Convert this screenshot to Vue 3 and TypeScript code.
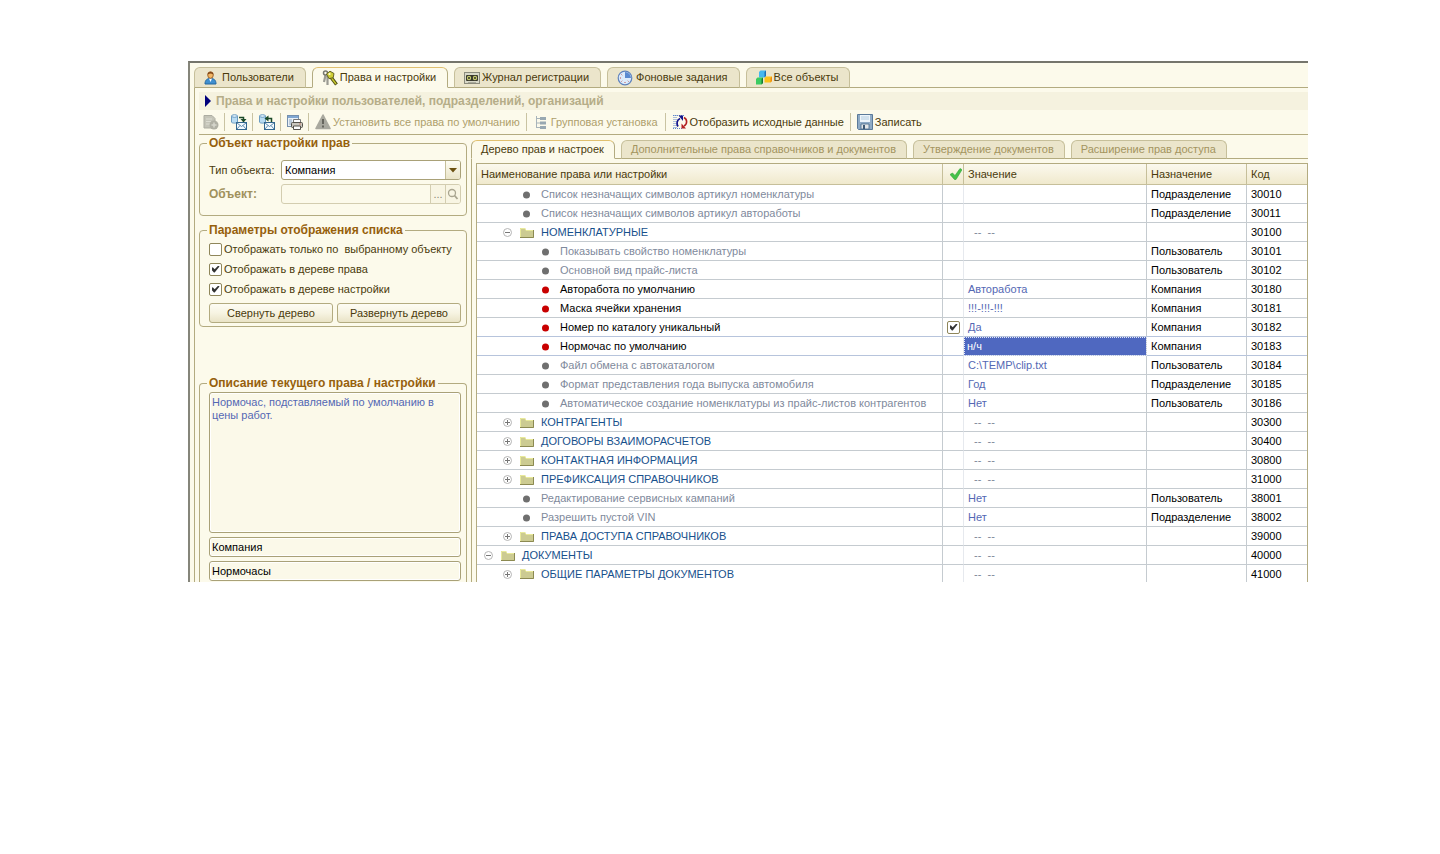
<script setup lang="ts">
import { ref } from 'vue'

type Kind = 'folder' | 'open' | 'gray' | 'red'
interface Row {
  level: 1 | 2 | 3
  kind: Kind
  name: string
  value: string
  target: string
  code: string
  checked?: boolean
  selected?: boolean
}

const P = 'Подразделение'
const U = 'Пользователь'
const K = 'Компания'
const DASH = '\u00a0\u00a0--\u00a0\u00a0--'

const row = (level: 1 | 2 | 3, kind: Kind, name: string, value: string, target: string, code: string): Row => ({
  level, kind, name, value, target, code,
})

const rows: Row[] = [
  row(2, 'gray', 'Список незначащих символов артикул номенклатуры', '', P, '30010'),
  row(2, 'gray', 'Список незначащих символов артикул автоработы', '', P, '30011'),
  row(2, 'open', 'НОМЕНКЛАТУРНЫЕ', DASH, '', '30100'),
  row(3, 'gray', 'Показывать свойство номенклатуры', '', U, '30101'),
  row(3, 'gray', 'Основной вид прайс-листа', '', U, '30102'),
  row(3, 'red', 'Авторабота по умолчанию', 'Авторабота', K, '30180'),
  row(3, 'red', 'Маска ячейки хранения', '!!!-!!!-!!!', K, '30181'),
  { ...row(3, 'red', 'Номер по каталогу уникальный', 'Да', K, '30182'), checked: true },
  { ...row(3, 'red', 'Нормочас по умолчанию', 'н/ч', K, '30183'), selected: true },
  row(3, 'gray', 'Файл обмена с автокаталогом', 'C:\\TEMP\\clip.txt', U, '30184'),
  row(3, 'gray', 'Формат представления года выпуска автомобиля', 'Год', P, '30185'),
  row(3, 'gray', 'Автоматическое создание номенклатуры из прайс-листов контрагентов', 'Нет', U, '30186'),
  row(2, 'folder', 'КОНТРАГЕНТЫ', DASH, '', '30300'),
  row(2, 'folder', 'ДОГОВОРЫ ВЗАИМОРАСЧЕТОВ', DASH, '', '30400'),
  row(2, 'folder', 'КОНТАКТНАЯ ИНФОРМАЦИЯ', DASH, '', '30800'),
  row(2, 'folder', 'ПРЕФИКСАЦИЯ СПРАВОЧНИКОВ', DASH, '', '31000'),
  row(2, 'gray', 'Редактирование сервисных кампаний', 'Нет', U, '38001'),
  row(2, 'gray', 'Разрешить пустой VIN', 'Нет', P, '38002'),
  row(2, 'folder', 'ПРАВА ДОСТУПА СПРАВОЧНИКОВ', DASH, '', '39000'),
  row(1, 'open', 'ДОКУМЕНТЫ', DASH, '', '40000'),
  row(2, 'folder', 'ОБЩИЕ ПАРАМЕТРЫ ДОКУМЕНТОВ', DASH, '', '41000'),
]

const isFolder = (r: Row) => r.kind === 'folder' || r.kind === 'open'

const onlySelected = ref(false)
const showRights = ref(true)
const showSettings = ref(true)
const objectType = ref('Компания')
const description = ref('Нормочас, подставляемый по умолчанию в цены работ.')
const scope = ref('Компания')
const valueType = ref('Нормочасы')
</script>

<template>
  <div class="page">
    <main class="window">
      <nav class="tabs" aria-label="Разделы">
        <button class="tab" type="button">
          <svg class="ico" viewBox="0 0 16 16" width="16" height="16">
            <path d="M1 14c0-4 2-5.500 5.500-5.500S12 10 12 14z" fill="#3f8fd0" stroke="#23679f" />
            <path d="M5 8.500h3L6.500 12z" fill="#fff" />
            <ellipse cx="6.500" cy="5" rx="2.800" ry="3.300" fill="#f2b765" stroke="#8a4d17" stroke-width=".8" />
            <path d="M3.600 4.500C3.500 1 9.500 1 9.400 4.500 7.500 3.200 5.500 3.200 3.600 4.500z" fill="#7a3e12" />
          </svg>
          <span>Пользователи</span>
        </button>
        <button class="tab active" type="button">
          <svg class="ico" viewBox="0 0 16 16" width="16" height="16">
            <path d="M3.500 5l-1.500 7M5.500 6v9" stroke="#9a9a92" stroke-width="2.200" fill="none" />
            <circle cx="3.500" cy="3" r="2" fill="none" stroke="#777770" stroke-width="1.500" />
            <path d="M8 6l6.500 8.500" stroke="#4c4c12" stroke-width="3.400" />
            <path d="M8 6l6 8" stroke="#c6c62c" stroke-width="1.400" />
            <path d="M4.500 4L8 1.200l4 2.300-.8 4.200-4.200 1z" fill="#cfce36" stroke="#56551a" stroke-width=".9" />
            <circle cx="7.500" cy="4" r="1.100" fill="#fffbe0" />
          </svg>
          <span>Права и настройки</span>
        </button>
        <button class="tab" type="button">
          <svg class="ico" viewBox="0 0 16 16" width="16" height="16">
            <rect x=".5" y="2.500" width="15" height="11" fill="#d8d8c8" stroke="#8b8b7c" />
            <rect x="2" y="5" width="12" height="6" rx="1" fill="#38382c" />
            <circle cx="5" cy="8" r="2.200" fill="#c8cc70" /><circle cx="11" cy="8" r="2.200" fill="#c8cc70" />
            <circle cx="5" cy="8" r=".9" fill="#222" /><circle cx="11" cy="8" r=".9" fill="#222" />
            <path d="M4 12.500h8" stroke="#a9a99a" />
          </svg>
          <span>Журнал регистрации</span>
        </button>
        <button class="tab" type="button">
          <svg class="ico clock" viewBox="0 0 16 16" width="16" height="16">
            <circle cx="8" cy="8" r="6.800" fill="#dcebfb" stroke="#5f82bd" stroke-width="1.200" />
            <path d="M8 8V2a6 6 0 0 1 6 6z" fill="#5b8ad0" />
            <path d="M3 8h1M8 12v1M4.500 4.500l.7.700M11.500 11.500l-.7-.7M4.500 11.500l.7-.7" stroke="#c0504a" />
          </svg>
          <span>Фоновые задания</span>
        </button>
        <button class="tab" type="button">
          <svg class="ico" viewBox="0 0 16 16" width="16" height="16">
            <path d="M3 2l1.500-1.500H10V6L8.500 7.500H3z" fill="#45b8ee" /><path d="M8.500 2L10 .5V6L8.500 7.500z" fill="#1d6fb4" />
            <path d="M0 9l1.500-1.500H7V13l-1.500 1.500H0z" fill="#3ccb62" /><path d="M5.500 9L7 7.500V13l-1.500 1.500z" fill="#157a30" />
            <path d="M8.500 8L10 6.500h6V11l-1.500 1.500h-6z" fill="#fbc31a" /><path d="M14.500 8L16 6.500V11l-1.500 1.500z" fill="#f08a12" />
          </svg>
          <span>Все объекты</span>
        </button>
      </nav>

      <div class="panel">
        <h1 class="caption">
          <svg viewBox="0 0 6 12" width="6" height="12"><path d="M0 0l6 6-6 6z" fill="#00007c" /></svg>
          Права и настройки пользователей, подразделений, организаций
        </h1>

        <div class="toolbar" role="toolbar" aria-label="Действия">
          <button type="button" class="tool square" disabled aria-label="Добавить">
            <svg viewBox="0 0 16 16" width="16" height="16">
              <path d="M1 1.500h8l3 3V14H1z" fill="#c4c4b8" stroke="#adada2" />
              <path d="M3 5h6M3 7.500h5M3 10h4" stroke="#dcdcd2" />
              <circle cx="11" cy="11" r="4.500" fill="#b0b0a4" /><path d="M11 8.500v5M8.500 11h5" stroke="#d6d6cc" stroke-width="1.500" />
            </svg>
          </button>
          <i class="sep"></i>
          <button type="button" class="tool square" aria-label="Выгрузить">
            <svg viewBox="0 0 16 16" width="16" height="16">
              <path d="M.5 2v6c0 1.500 6 1.500 6 0V2" fill="#b9dcf3" stroke="#6b9cc2" /><ellipse cx="3.500" cy="2" rx="3" ry="1.300" fill="#e5f4fd" stroke="#6b9cc2" />
              <path d="M8 3.500h4.500V6" fill="none" stroke="#1b4a28" stroke-width="1.500" /><path d="M9.500 5h6L12.500 8.500z" fill="#1b4a28" />
              <rect x="5.500" y="8.500" width="10" height="7" fill="#f4fafe" stroke="#33678f" /><path d="M6 9l4.500 3.500L15 9M6 15l3-3.500M15 15l-3-3.500" fill="none" stroke="#5f8cb0" />
            </svg>
          </button>
          <i class="sep"></i>
          <button type="button" class="tool square" aria-label="Загрузить">
            <svg viewBox="0 0 16 16" width="16" height="16">
              <path d="M.5 2v6c0 1.500 6 1.500 6 0V2" fill="#b9dcf3" stroke="#6b9cc2" /><ellipse cx="3.500" cy="2" rx="3" ry="1.300" fill="#e5f4fd" stroke="#6b9cc2" />
              <path d="M8 4.500h4.500V8" fill="none" stroke="#1b4a28" stroke-width="1.500" /><path d="M9.500 1.500v6L5.500 4.500z" fill="#1b4a28" />
              <rect x="5.500" y="8.500" width="10" height="7" fill="#f4fafe" stroke="#33678f" /><path d="M6 9l4.500 3.500L15 9M6 15l3-3.500M15 15l-3-3.500" fill="none" stroke="#5f8cb0" />
            </svg>
          </button>
          <i class="sep"></i>
          <button type="button" class="tool square" aria-label="Печать">
            <svg viewBox="0 0 16 16" width="16" height="16">
              <rect x=".5" y="1.500" width="11" height="11" fill="#e8f0f8" stroke="#7590ae" /><path d="M1 3h10" stroke="#7fa6d2" stroke-width="2" />
              <path d="M2 6h3M2 8h3M2 10h2" stroke="#8fa6bd" />
              <path d="M6.500 5.500h7V9h-7z" fill="#fff" stroke="#777" />
              <rect x="4.500" y="8.500" width="11" height="5" rx="1" fill="#c9c6bd" stroke="#55524b" />
              <path d="M6.500 12h7v3.500h-7z" fill="#fff" stroke="#55524b" /><path d="M12.500 10h1" stroke="#c23a26" />
            </svg>
          </button>
          <i class="sep"></i>
          <button type="button" class="tool" disabled>
            <svg viewBox="0 0 16 16" width="16" height="16">
              <path d="M8 1l7 13.500H1z" fill="#a9a99f" stroke="#a9a99f" stroke-width="1.600" stroke-linejoin="round" />
              <path d="M8 5v5M8 11.500v2" stroke="#66665e" stroke-width="2" />
            </svg>
            <span>Установить все права по умолчанию</span>
          </button>
          <i class="sep"></i>
          <button type="button" class="tool spaced" disabled>
            <svg viewBox="0 0 12 16" width="12" height="16">
              <path d="M1.500 2v12M1.500 4.500H5M1.500 9H5M1.500 13.500H5" stroke="#a8b4ba" fill="none" />
              <path d="M5 3h6v3H5zM5 7.500h6v3H5zM5 12h6v3H5z" fill="#98a8b2" />
            </svg>
            <span>Групповая установка</span>
          </button>
          <i class="sep"></i>
          <button type="button" class="tool">
            <svg viewBox="0 0 16 16" width="16" height="16">
              <path d="M2 1v14M4 1v14M1 1.500h12M1 14.500h9" stroke="#5f86cc" stroke-dasharray="1 1" />
              <path d="M6 12.500C4.500 10 4.500 6 8 4.500" fill="none" stroke="#15158c" stroke-width="1.700" /><path d="M6.500 1.500H11V7z" fill="#15158c" />
              <path d="M12 3.500c3.500 2 3.500 6.500 0 8.500" fill="none" stroke="#b32020" stroke-width="1.600" /><path d="M14 14.500H9.500V9.500z" fill="#b32020" />
            </svg>
            <span>Отобразить исходные данные</span>
          </button>
          <i class="sep"></i>
          <button type="button" class="tool">
            <svg viewBox="0 0 16 16" width="16" height="16">
              <path d="M.5.5h15v15h-14l-1-1z" fill="#8fabc6" stroke="#5b7a9a" />
              <path d="M3 1h10v7H3z" fill="#edf5fb" /><path d="M4 3h8M4 5h8" stroke="#b5cde0" />
              <path d="M4 10h8v5H4z" fill="#e3e6e8" stroke="#48698c" stroke-width=".8" /><path d="M6 11h2v4H6z" fill="#3d5873" />
            </svg>
            <span>Записать</span>
          </button>
        </div>

        <div class="body">
          <form class="side" @submit.prevent>
            <fieldset class="object">
              <legend>Объект настройки прав</legend>
              <div class="field">
                <label for="object-type">Тип объекта:</label>
                <div class="combo">
                  <select id="object-type" v-model="objectType">
                    <option>Компания</option>
                    <option>Подразделение</option>
                    <option>Пользователь</option>
                  </select>
                  <span class="arrow"><svg viewBox="0 0 8 5" width="8" height="5"><path d="M0 0h8L4 4.500z" fill="#6b5010" /></svg></span>
                </div>
              </div>
              <div class="field off">
                <label for="object-ref">Объект:</label>
                <div class="combo">
                  <input id="object-ref" type="text" disabled />
                  <button type="button" disabled class="pick">...</button>
                  <button type="button" disabled class="pick" aria-label="Открыть">
                    <svg viewBox="0 0 12 12" width="12" height="12"><circle cx="5" cy="5" r="3.500" fill="none" stroke="#a9a590" stroke-width="1.300" /><path d="M7.500 7.500l3 3.500" stroke="#a9a590" stroke-width="1.800" /></svg>
                  </button>
                </div>
              </div>
            </fieldset>

            <fieldset class="options">
              <legend>Параметры отображения списка</legend>
              <label class="check"><input v-model="onlySelected" type="checkbox" />Отображать только по&nbsp; выбранному объекту</label>
              <label class="check"><input v-model="showRights" type="checkbox" />Отображать в дереве права</label>
              <label class="check"><input v-model="showSettings" type="checkbox" />Отображать в дереве настройки</label>
              <div class="buttons">
                <button type="button">Свернуть дерево</button>
                <button type="button">Развернуть дерево</button>
              </div>
            </fieldset>

            <fieldset class="about">
              <legend>Описание текущего права / настройки</legend>
              <textarea v-model="description" readonly aria-label="Описание"></textarea>
              <input v-model="scope" type="text" readonly aria-label="Назначение" />
              <input v-model="valueType" type="text" readonly aria-label="Тип значения" />
            </fieldset>
          </form>

          <section class="content">
            <nav class="tabs sub" aria-label="Страницы">
              <button class="tab active" type="button">Дерево прав и настроек</button>
              <button class="tab" type="button" disabled>Дополнительные права справочников и документов</button>
              <button class="tab" type="button" disabled>Утверждение документов</button>
              <button class="tab" type="button" disabled>Расширение прав доступа</button>
            </nav>
            <div class="sheet">
              <table>
                <colgroup><col /><col class="c-check" /><col class="c-value" /><col class="c-target" /><col class="c-code" /></colgroup>
                <thead>
                  <tr>
                    <th scope="col">Наименование права или настройки</th>
                    <th scope="col" class="mark" aria-label="Отметка">
                      <svg viewBox="0 0 12 12" width="12" height="12"><path d="M0 6.500l2.500-1.500L5 7.500 10 .5l2 1.200L6 11.500H4.500z" fill="#45c24a" stroke="#2fa437" stroke-width=".6" /></svg>
                    </th>
                    <th scope="col">Значение</th>
                    <th scope="col">Назначение</th>
                    <th scope="col">Код</th>
                  </tr>
                </thead>
                <tbody>
                  <tr v-for="r in rows" :key="r.code" :class="{ current: r.selected, before: r.checked }">
                    <td>
                      <div class="node" :class="[`l${r.level}`, r.kind]">
                        <span class="toggle">
                          <svg v-if="isFolder(r)" viewBox="0 0 9 9" width="9" height="9">
                            <circle cx="4.500" cy="4.500" r="4" fill="#fff" stroke="#b4b4b4" />
                            <path :d="r.kind === 'open' ? 'M2 4.500h5' : 'M2 4.500h5M4.500 2v5'" stroke="#777" />
                          </svg>
                        </span>
                        <svg v-if="isFolder(r)" class="glyph" viewBox="0 0 24 12" width="24" height="12">
                          <path d="M3 1h5l1 2h8v8H3z" fill="#cccb92" />
                          <path d="M3.500 11V1.500H8l1 2h8" fill="none" stroke="#e9ea9a" />
                          <path d="M3 10.500h13.500V3" fill="none" stroke="#8c8a52" />
                        </svg>
                        <svg v-else class="glyph" viewBox="0 0 24 12" width="24" height="12">
                          <circle cx="9.500" cy="6" r="3.500" :fill="r.kind === 'red' ? '#c80000' : '#6f6f6f'" />
                        </svg>
                        <span>{{ r.name }}</span>
                      </div>
                    </td>
                    <td class="mark"><input v-if="r.checked" type="checkbox" checked :aria-label="r.name" /></td>
                    <td class="value" :class="{ selected: r.selected, dash: isFolder(r) }">{{ r.value }}</td>
                    <td>{{ r.target }}</td>
                    <td>{{ r.code }}</td>
                  </tr>
                </tbody>
              </table>
            </div>
          </section>
        </div>
      </div>
    </main>
  </div>
</template>

<style>
body {
  background: #fff;
}
</style>

<style scoped>
.page {
  padding: 61px 132px 0 188px;
  font-family: 'Liberation Sans', Arial, sans-serif;
  font-size: 11px;
  line-height: 13px;
  color: #4a3a0c;
}
.page * {
  box-sizing: border-box;
}
button,
input,
select,
textarea {
  font: inherit;
  color: inherit;
  margin: 0;
}
svg {
  display: block;
  flex: none;
}
.window {
  border-top: 2px solid #75756c;
  border-left: 2px solid #85857a;
  background: #fcfaeb;
  padding: 4px 0 0 4px;
}
.tabs {
  display: flex;
  align-items: flex-end;
  gap: 6px;
  box-shadow: inset 0 -1px #b3ab80;
}
.tab {
  display: flex;
  align-items: center;
  height: 21px;
  padding: 0 11px 0 9px;
  border: 1px solid #c6bf9a;
  border-bottom-color: #b3ab80;
  border-radius: 6px 6px 0 0;
  background: #ebe5cb;
  white-space: nowrap;
}
.tab .ico {
  margin-right: 2px;
}
.tab .clock {
  margin-right: 3px;
}
.tab.active {
  background: #fcfaeb;
  border-color: #b3ab80;
  border-top-color: #e0c070;
  border-bottom-color: #fcfaeb;
}
.panel {
  border-left: 1px solid #b3ab80;
  padding: 4px 0 0 4px;
}
.caption {
  display: flex;
  align-items: center;
  gap: 5px;
  height: 18px;
  margin: 0;
  padding-left: 6px;
  background: #f5f2df;
  color: #b5ad88;
  font-size: 12px;
  font-weight: bold;
}
.toolbar {
  display: flex;
  align-items: center;
  height: 25px;
  border-bottom: 1px solid #b3ab80;
}
.tool {
  display: flex;
  align-items: center;
  gap: 2px;
  padding: 0 5px 0 4px;
  border: 0;
  background: none;
  white-space: nowrap;
}
.tool.square {
  padding: 0 4px;
}
.tool.spaced {
  gap: 4px;
  padding: 0 6px;
}
.tool:disabled {
  color: #ae9f6c;
}
.sep {
  width: 1px;
  height: 18px;
  margin: 0 2px 0 1px;
  background: #c9c3a2;
}
.body {
  display: grid;
  grid-template-columns: 268px minmax(0, 1fr);
  column-gap: 4px;
}
.side {
  display: flex;
  flex-direction: column;
  padding-top: 1px;
}
fieldset {
  min-width: 0;
  margin: 0;
  border: 1px solid #b3ab80;
  border-radius: 4px;
}
legend {
  margin: 0;
  padding: 0 2px;
  font-size: 12px;
  line-height: 15px;
  font-weight: bold;
  color: #96600c;
}
.object {
  padding: 9px 5px 11px 7px;
}
.field {
  display: flex;
  align-items: center;
  padding-left: 2px;
}
.field + .field {
  margin-top: 4px;
}
.field label {
  width: 72px;
}
.off label {
  font-size: 12px;
  font-weight: bold;
  color: #a0915c;
}
.combo {
  position: relative;
  display: flex;
  flex: 1;
  min-width: 0;
  height: 20px;
  border: 1px solid #a9a178;
  border-radius: 3px;
  background: #fff;
  overflow: hidden;
}
.combo select,
.combo input {
  flex: 1;
  min-width: 0;
  width: 100%;
  padding: 0 3px;
  border: 0;
  appearance: none;
  background: transparent;
  color: #000;
}
.arrow {
  position: absolute;
  top: 0;
  right: 0;
  bottom: 0;
  width: 15px;
  display: grid;
  place-items: center;
  border-left: 1px solid #c6bf9a;
  background: linear-gradient(#fdfcf2, #eae4c8);
  pointer-events: none;
}
.off .combo {
  border-color: #d3cdb0;
  background: #fcfaeb;
}
.pick {
  display: grid;
  place-items: center;
  width: 15px;
  padding: 0;
  border: 0;
  border-left: 1px solid #d3cdb0;
  background: #f8f5e3;
  color: #8d8872;
}
.options {
  margin-top: 7px;
  padding: 1px 5px 3px 7px;
}
.check {
  display: flex;
  align-items: center;
  gap: 2px;
  height: 20px;
  padding-left: 2px;
  white-space: nowrap;
}
input[type='checkbox'] {
  display: grid;
  place-items: center;
  flex: none;
  width: 13px;
  height: 13px;
  appearance: none;
  border: 1px solid #8f865a;
  border-radius: 2px;
  background: #fff;
}
input[type='checkbox']:checked::before {
  content: '';
  width: 8px;
  height: 7px;
  background: #333;
  clip-path: polygon(0 35%, 15% 25%, 40% 55%, 85% 0, 100% 15%, 40% 100%, 30% 100%, 0 60%);
}
.buttons {
  display: flex;
  gap: 4px;
  margin-top: 4px;
  padding-left: 2px;
}
.buttons button {
  flex: 1;
  height: 20px;
  padding: 0;
  border: 1px solid #b3ab80;
  border-radius: 3px;
  background: linear-gradient(#fdfcf4, #f7f4e2 50%, #e9e3c6);
  white-space: nowrap;
}
.about {
  display: flex;
  flex-direction: column;
  margin-top: 49px;
  padding: 1px 5px 1px 7px;
  border-bottom: 0;
  border-radius: 4px 4px 0 0;
}
.about textarea,
.about input {
  margin-left: 2px;
  border: 1px solid #a9a178;
  border-radius: 3px;
  background: #fbf9e9;
  box-shadow: inset 0 0 0 1px #fff;
  padding: 3px 2px;
}
.about textarea {
  display: block;
  height: 141px;
  resize: none;
  color: #5468b4;
}
.about input {
  height: 20px;
  margin-top: 4px;
  padding: 0 2px;
  color: #000;
}
.content {
  padding-top: 5px;
  display: flex;
  flex-direction: column;
}
.sub .tab {
  height: 19px;
  padding: 0 10px 0 9px;
}
.sub .tab:disabled {
  color: #a3945f;
}
.sheet {
  flex: 1;
  border-left: 1px solid #b3ab80;
  padding: 4px 0 0 4px;
}
table {
  width: 100%;
  table-layout: fixed;
  border-collapse: separate;
  border-spacing: 0;
  border: 1px solid #b3ab80;
  border-bottom: 0;
  background: #fff;
  color: #000;
}
.c-check {
  width: 21px;
}
.c-value {
  width: 183px;
}
.c-target {
  width: 100px;
}
.c-code {
  width: 60px;
}
th {
  height: 21px;
  padding: 0 4px;
  border-right: 1px solid #c6bf9a;
  border-bottom: 1px solid #c6bf9a;
  background: linear-gradient(#fbf9ee, #f0e9cd);
  text-align: left;
  font-weight: normal;
  color: #4a3a0c;
}
td {
  height: 19px;
  padding: 1px 4px 0;
  border-right: 1px solid #c5cbd0;
  border-bottom: 1px solid #c5cbd0;
  white-space: nowrap;
  overflow: hidden;
}
th:last-child,
td:last-child {
  border-right: 0;
}
tr:last-child td {
  height: 17px;
  border-bottom: 0;
}
td:first-child {
  padding: 1px 0 0 2px;
}
th.mark,
td.mark {
  padding: 0 0 0 4px;
}
th.mark {
  padding-left: 7px;
}
td.mark {
  border-right-color: #e6e9ee;
}
.current td,
.before td {
  border-bottom-color: #b7c4dc;
}
.value {
  color: #5468b4;
}
.dash {
  color: #7c8698;
}
td.selected {
  padding-left: 3px;
  background: #4f68c0;
  color: #fff;
  outline: 1px dotted #e4e8fa;
  outline-offset: -1px;
}
.node {
  display: flex;
  align-items: center;
}
.l2 {
  padding-left: 19px;
}
.l3 {
  padding-left: 38px;
}
.toggle {
  display: grid;
  place-items: center;
  width: 19px;
  flex: none;
}
.gray {
  color: #7f8a9c;
}
.folder,
.open {
  color: #17508c;
}
</style>
